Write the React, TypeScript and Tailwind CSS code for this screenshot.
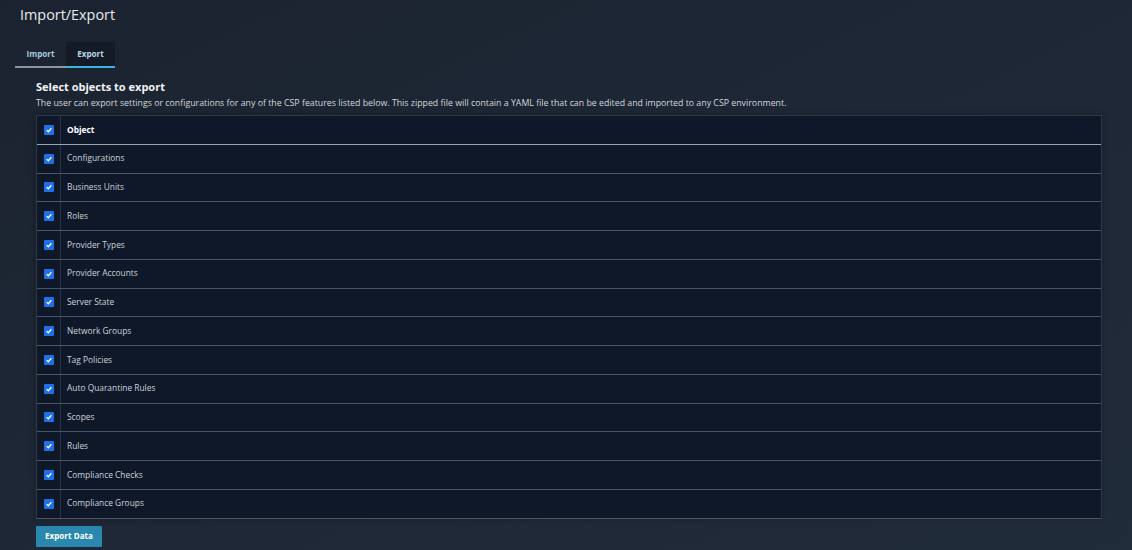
const objects = [
  "Configurations",
  "Business Units",
  "Roles",
  "Provider Types",
  "Provider Accounts",
  "Server State",
  "Network Groups",
  "Tag Policies",
  "Auto Quarantine Rules",
  "Scopes",
  "Rules",
  "Compliance Checks",
  "Compliance Groups",
];

const Check = () => (
  <span className="flex h-[10px] w-[10px] items-center justify-center rounded-[1px] bg-[#1f6fe5]">
    <svg viewBox="0 0 10 10" className="h-[8px] w-[8px]">
      <path d="M2 5.2 L4.1 7.2 L8 2.8" fill="none" stroke="white" strokeWidth="1.6" />
    </svg>
  </span>
);

const Row = ({ label, header }: { label: string; header?: boolean }) => (
  <div
    className={`flex h-[28.75px] items-stretch border-b ${
      header ? "border-[#9aa4b1]" : "border-[#4b5563]"
    }`}
  >
    <div className="flex w-[24px] items-center justify-center border-r border-[#2a3444]">
      <Check />
    </div>
    <div
      className={`flex items-center pl-[6px] text-[8.4px] ${
        header ? "font-bold text-white" : "text-[#cdd2d9]"
      }`}
    >
      {label}
    </div>
  </div>
);

export default function App() {
  return (
    <div
      className="h-[550px] w-full overflow-hidden bg-gradient-to-br from-[#1b2330] to-[#212c3b] text-white"
      style={{ fontFamily: '"Open Sans", sans-serif' }}
    >
      <div className="px-[20px] pt-[5px] text-[14.4px] leading-[20px] text-[#e8ebef]">Import/Export</div>

      <div className="ml-[15px] mt-[17px] flex text-[8.1px] font-bold">
        <div className="flex h-[26px] w-[51px] items-center justify-center border-b-2 border-[#8d96a1] text-[#a9c9df]">
          Import
        </div>
        <div className="flex h-[26px] w-[49px] items-center justify-center border-b-2 border-[#3bb3e0] bg-[#141b26] text-[#b7d6e6]">
          Export
        </div>
      </div>

      <div className="pl-[36px] pr-[30px] pt-[10px]">
        <div className="text-[11px] font-bold leading-[18px] text-[#f1f3f5]">Select objects to export</div>
        <div className="text-[8.8px] leading-[14px] text-[#d2d6dc]">
          The user can export settings or configurations for any of the CSP features listed below. This zipped
          file will contain a YAML file that can be edited and imported to any CSP environment.
        </div>

        <div className="mt-[5px] border-x border-t border-[#2e3847] bg-[#0e1829] shadow-[0_0_6px_rgba(0,0,0,0.3)]">
          <Row label="Object" header />
          {objects.map((o) => (
            <Row key={o} label={o} />
          ))}
        </div>

        <button className="mt-[7px] h-[21px] rounded-[1px] bg-[#2a87ad] px-[9px] text-[8.1px] font-bold text-white">
          Export Data
        </button>
      </div>
    </div>
  );
}
